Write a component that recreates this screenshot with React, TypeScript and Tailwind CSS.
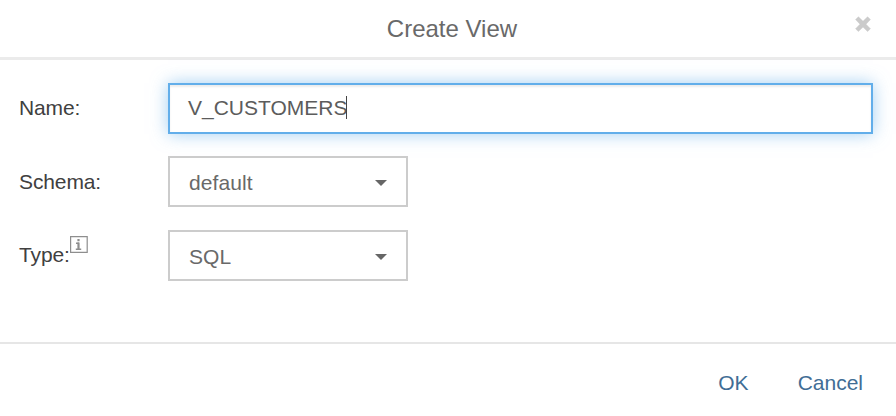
export default function App() {
  return (
    <div className="flex h-[416px] w-[896px] flex-col overflow-hidden bg-white font-['Liberation_Sans',Arial,sans-serif] text-[21px] leading-6 text-[#404040]">
      <header className="grid h-[60px] shrink-0 grid-cols-[1fr_auto_1fr] border-b-[3px] border-[#ebebeb]">
        <span />
        <h1 className="mt-[17px] ml-[8px] text-[24px] leading-6 text-[#696969]">Create View</h1>
        <button aria-label="Close" className="mt-[16px] mr-[25px] flex h-4 justify-end">
          <svg width="16" height="16" viewBox="0 0 16 16" fill="#cbcbcb"><path d="M3.4 .8L8 5.2L12.6 .8L15.4 3.6L11 8.2L15.4 12.8L12.6 15.5L8 11.1L3.4 15.5L.6 12.8L5 8.2L.6 3.6Z" stroke="#cbcbcb" strokeWidth=".5" strokeLinejoin="round" /></svg>
        </button>
      </header>
      <main className="flex h-[282px] shrink-0 flex-col pt-[23px] pl-[19px]">
        <div className="mb-[22px] flex h-[51px] items-center">
          <label className="w-[149px] pb-[2px] tracking-[-0.12px]">Name:</label>
          <div className="flex h-[51px] w-[705px] items-center border-2 border-[#62aeea] pb-[2px] pl-[18px] text-[#5c5c5c] shadow-[0_0_16px_rgba(102,175,233,0.6),inset_0_2px_2px_rgba(0,0,0,0.075)]">
            <span className="-mr-px">V_CUSTOMERS</span><span className="h-[23px] w-px bg-[#444]" />
          </div>
        </div>
        <Row label="Schema:" value="default" />
        <div className="h-[23px] shrink-0" />
        <Row label="Type:" value="SQL" info />
      </main>
      <footer className="flex h-[74px] shrink-0 items-center justify-end gap-[49px] border-t-2 border-[#e6e6e6] pt-[5px] pr-[33px] text-[#416d95]">
        <button>OK</button><button>Cancel</button>
      </footer>
    </div>
  );
}

function Row({ label, value, info = false }: { label: string; value: string; info?: boolean }) {
  return (
    <div className="flex h-[51px] items-center">
      <div className={info ? "flex w-[149px] items-start pb-[2px]" : "flex w-[149px] items-start"}>
        <label className="tracking-[-0.12px]">{label}</label>
        {info && (
          <svg className="-mt-[7px] h-[18px] w-[18px]" viewBox="0 0 18 18" fill="none" stroke="#8e8e8e">
            <path d="M.6 .6H17.2V16.4H.6Z" strokeWidth="1.2" />
            <path d="M6 7.2H9M5.8 13.2H11.2" strokeWidth="1.5" />
            <path d="M8.5 6.5V13.5M8.5 3.1V5.3" strokeWidth="2.2" />
          </svg>
        )}
      </div>
      <div className="flex h-[51px] w-[240px] items-center justify-between border-2 border-[#ccc] pt-[2px] pr-[19px] pl-[19px] text-[#696969]">
        <span className="tracking-[0.08px]">{value}</span>
        <svg width="12" height="6" viewBox="0 0 12 6" fill="#666"><path d="M0 0H12L6 6Z" /></svg>
      </div>
    </div>
  );
}
